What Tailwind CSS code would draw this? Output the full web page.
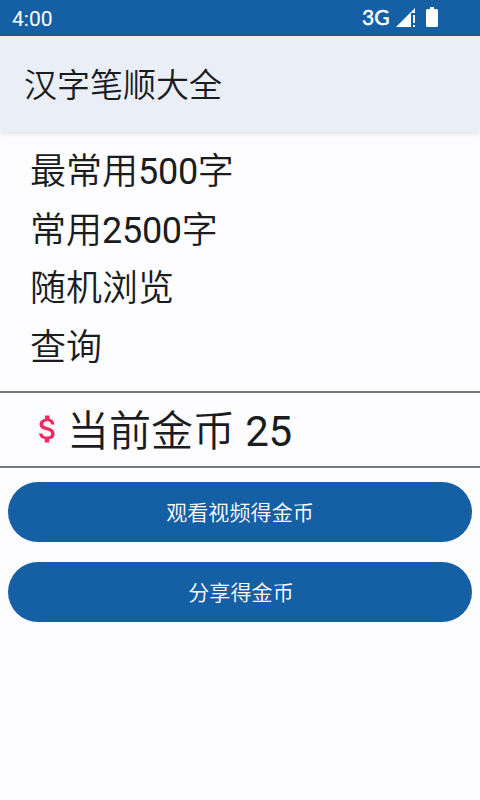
<!DOCTYPE html>
<html lang="zh-CN">
<head>
    <meta charset="UTF-8">
    <meta name="viewport" content="width=device-width, initial-scale=1.0">
    <title>汉字笔顺大全</title>
    <script src="https://cdn.jsdelivr.net/npm/@tailwindcss/browser@4"></script>
</head>
<body class="h-screen overflow-hidden bg-[#fdfcff] text-[#1a1c1e] font-[Roboto,'Noto_Sans_CJK_SC',sans-serif] font-[350]">
    <!-- Status bar -->
    <div class="flex h-9 items-center justify-between bg-[#155fa5] pl-3 text-white">
        <span class="text-[21px] leading-9 pt-0.5 font-normal">4:00</span>
        <div class="flex h-9 items-center pr-[42px]">
            <span class="font-[Lato,sans-serif] text-[21px] font-normal leading-[34px] pb-0.5 tracking-[0.3px] [-webkit-text-stroke:0.5px_white]">3G</span>
            <svg class="ml-1.5 h-5 w-5" viewBox="0 0 20 20" fill="currentColor">
                <path d="M0 19L19 0v5h-4v14z"/>
                <path d="M17 7h2v8h-2zM17 17h2v2h-2z"/>
            </svg>
            <svg class="mb-0.5 ml-2.5 h-5 w-3" viewBox="0 0 12 20" fill="currentColor">
                <path d="M4 0h4v2h3l1 1v16l-1 1H1l-1-1V3l1-1h3z"/>
            </svg>
        </div>
    </div>

    <!-- App bar -->
    <header class="flex h-24 items-center bg-[#e9eef7] pl-6 pt-[3px] shadow-[0_1px_5px_rgba(0,0,0,0.15)]">
        <h1 class="text-[33px] leading-none">汉字笔顺大全</h1>
    </header>

    <!-- Menu -->
    <nav class="flex h-[259px] flex-col pl-[30px] pt-[11px] text-[36px] leading-[59px]">
        <a>最常用<span class="font-normal tracking-[-0.3px]">500</span>字</a>
        <a>常用<span class="font-normal tracking-[-0.3px]">2500</span>字</a>
        <a class="-mt-px">随机浏览</a>
        <a>查询</a>
    </nav>

    <!-- Coins -->
    <div class="flex h-[77px] items-center border-y-2 border-[#74777f] pl-[38px]">
        <svg class="mb-0.5 h-7 w-[18px]" viewBox="0 0 18 28" fill="#f52760">
            <path d="M9.7 12.3c-3.4-.9-4.5-1.8-4.5-3.2 0-1.6 1.5-2.8 4.1-2.8 2.6 0 3.6 1.3 3.7 3.1h3.4c-.1-2.6-1.7-5-4.9-5.8V.5H7v3.3C4 4.4 1.6 6.3 1.6 9.2c0 3.4 2.8 5.1 7 6.1 3.7.9 4.5 2.2 4.5 3.6 0 1-.7 2.7-4.1 2.7-3.1 0-4.3-1.4-4.5-3.2H1.1c.2 3.3 2.7 5.2 5.7 5.8v3.3h4.500v-3.200c3-.6 5.300-2.300 5.300-5.400 0-4.300-3.700-5.700-6.900-6.600z"/>
        </svg>
        <span class="ml-[11px] pt-1 text-[42px] leading-none">当前金币 <span class="font-normal tracking-[-0.3px]">25</span></span>
    </div>

    <!-- Actions -->
    <div class="flex flex-col gap-5 px-2 pt-3.5">
        <button class="h-15 rounded-full bg-[#155fa5] pt-[3px] text-[21px] tracking-[0.1px] text-white">观看视频得金币</button>
        <button class="h-15 rounded-full bg-[#155fa5] pl-0.5 pt-[3px] text-[21px] tracking-[0.1px] text-white">分享得金币</button>
    </div>
</body>
</html>
